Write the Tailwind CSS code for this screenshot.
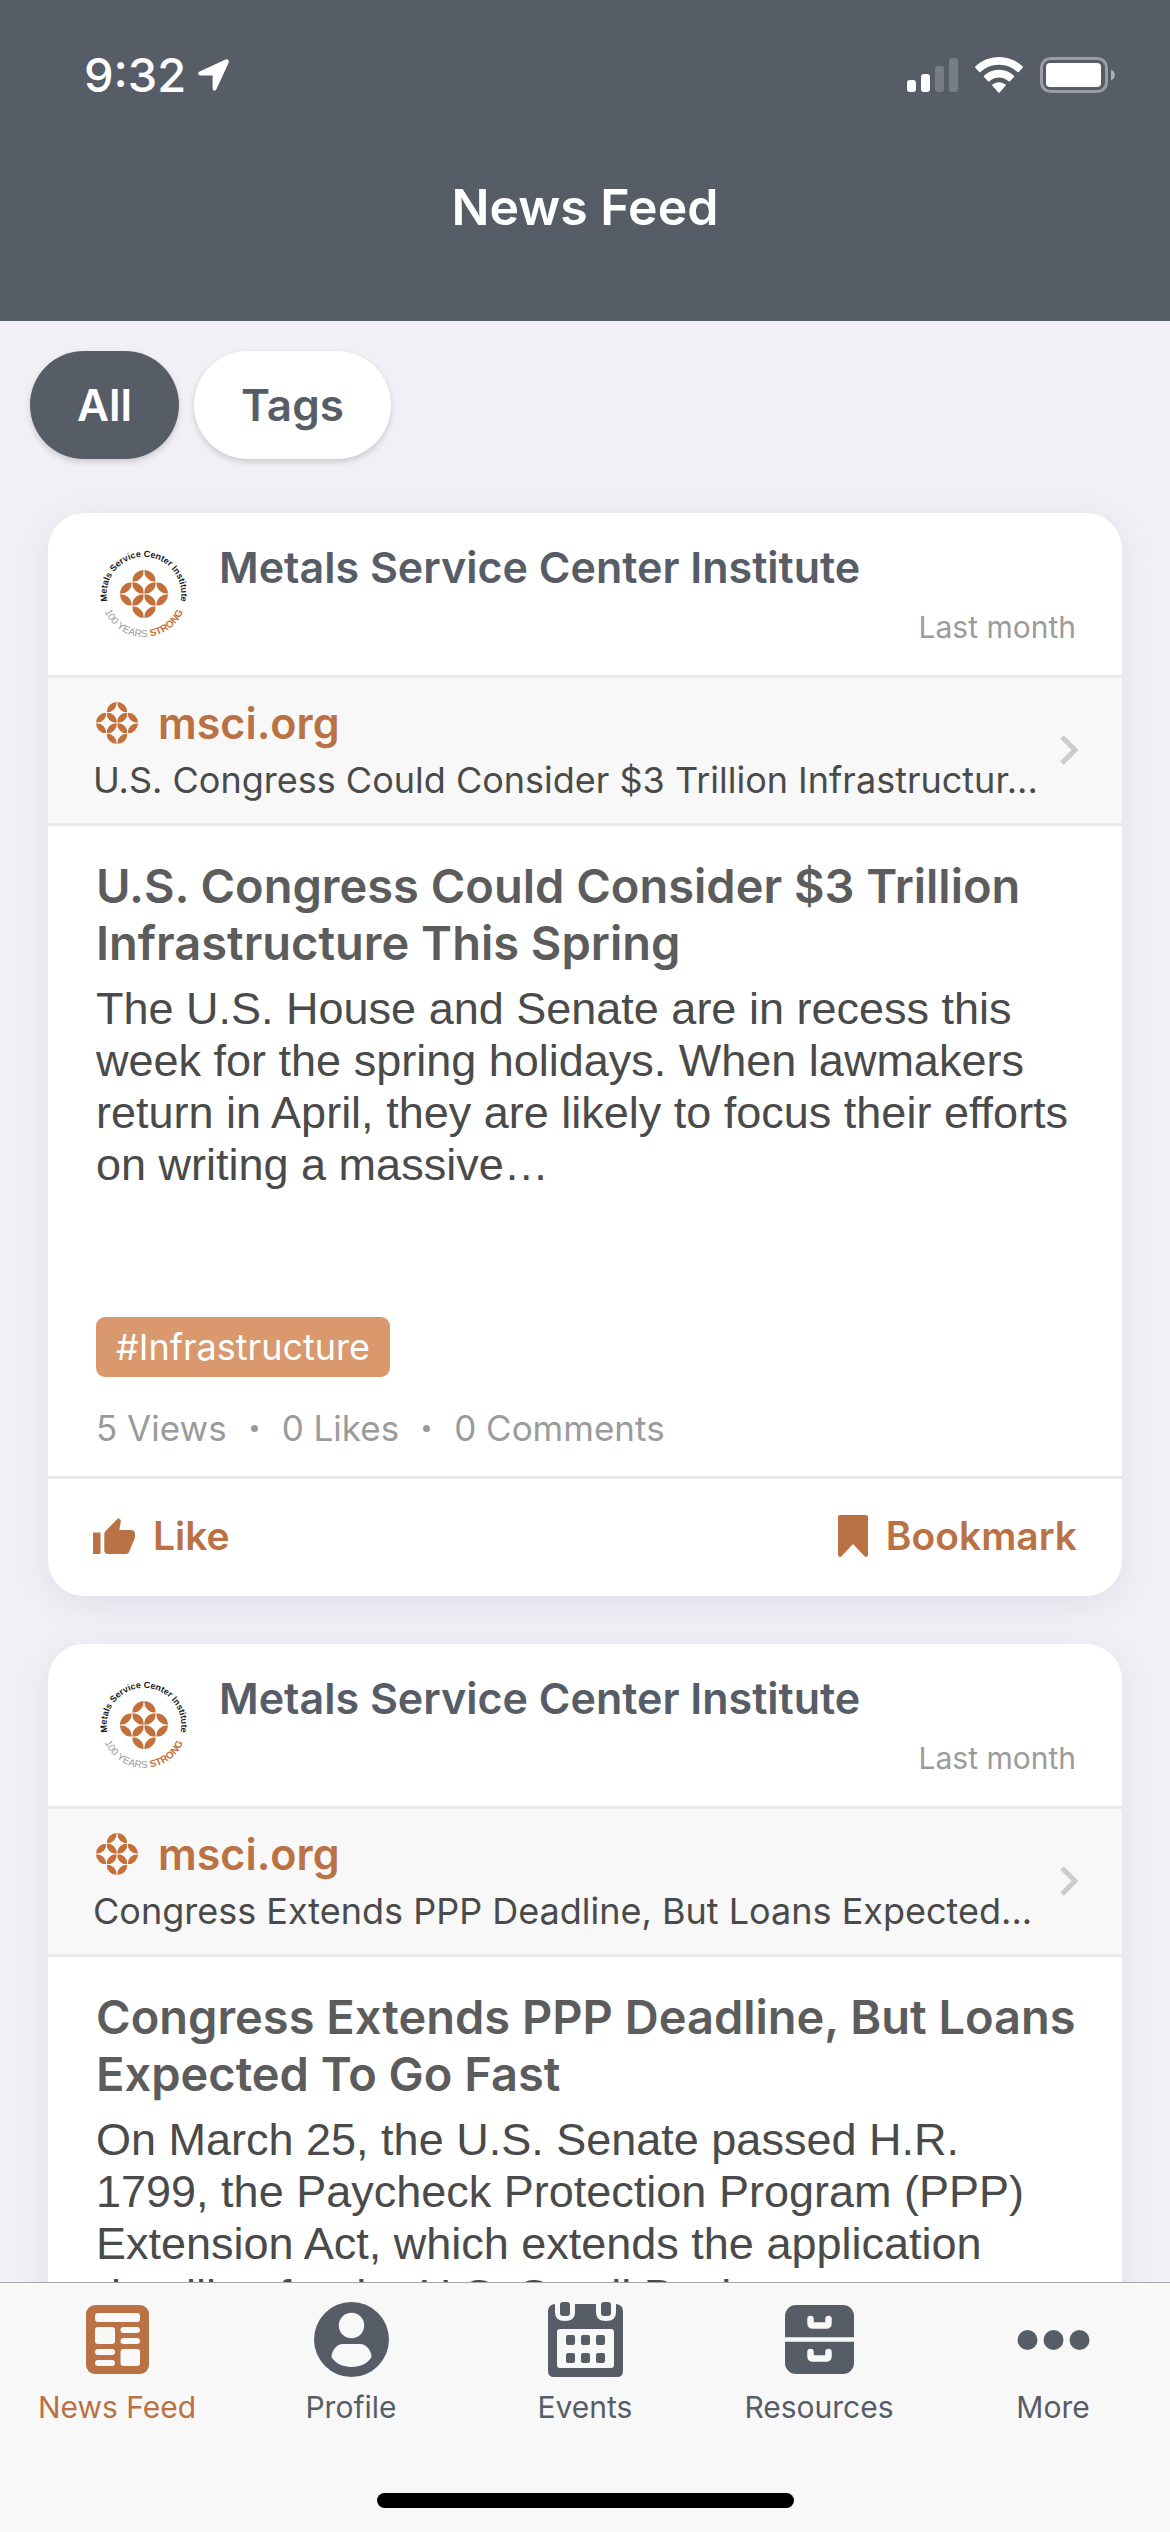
<!DOCTYPE html>
<html lang="en">
<head>
    <meta charset="UTF-8">
    <meta name="viewport" content="width=device-width, initial-scale=1.0">
    <title>News Feed</title>
    <script src="https://cdn.jsdelivr.net/npm/@tailwindcss/browser@4"></script>
</head>
<body class="flex h-screen flex-col overflow-hidden bg-[#f1f0f6] font-['Inter',sans-serif] text-[#4a4a4a]">

    <!-- Shared shapes -->
    <svg class="hidden" aria-hidden="true">
        <symbol id="rosette" viewBox="-20 -20 40 40">
            <g fill="#c4703a">
                <path id="ring" d="M0-20A10 10 0 0 1 10-10A10 10 0 0 1 0-20M10-10A10 10 0 0 1 0 0A10 10 0 0 1 10-10M0 0A10 10 0 0 1-10-10A10 10 0 0 1 0 0M-10-10A10 10 0 0 1 0-20A10 10 0 0 1-10-10"/>
                <use href="#ring" transform="rotate(90)"/>
                <use href="#ring" transform="rotate(180)"/>
                <use href="#ring" transform="rotate(270)"/>
            </g>
            <path d="M0-20V20M-20 0H20M-10-20V20M10-20V20M-20-10H20M-20 10H20" stroke="#fff" stroke-width=".7"/>
        </symbol>
        <symbol id="logo" viewBox="-48 -48 96 96">
            <path id="arc-top" d="M-35 13A37.300 37.300 0 1 1 35 13" fill="none"/>
            <path id="arc-bottom" d="M-43 0A43 43 0 0 0 43 0" fill="none"/>
            <use href="#rosette" x="-24" y="-24" width="48" height="48"/>
            <text font-family="Liberation Sans Narrow, Liberation Sans, sans-serif" font-weight="700" font-size="9" fill="#1a1a1a" text-anchor="middle"><textPath href="#arc-top" startOffset="50%">Metals Service Center Institute</textPath></text>
            <text font-family="Liberation Sans Narrow, Liberation Sans, sans-serif" font-size="10" fill="#9b9b9b" text-anchor="middle"><textPath href="#arc-bottom" startOffset="50%">100 YEARS <tspan fill="#c4703a" font-weight="700">STRONG</tspan></textPath></text>
        </symbol>
        <symbol id="chevron" viewBox="0 0 18 30">
            <path d="M2 2l13 13L2 28" fill="none" stroke="#cccccc" stroke-width="5"/>
        </symbol>
        <symbol id="thumb" viewBox="0 0 42 36">
            <path d="M0 14.500H7.500V36H0zM25.400 0l1.700 1.500q.9.900.7 2.200L26.300 12H38q4 0 4 4v2.600q0 .9-.3 1.700l-5.500 13.400Q35.200 36 33 36H15q-3.700 0-3.700-3.700V16q0-1.600 1.100-2.800z"/>
        </symbol>
        <symbol id="bookmark" viewBox="0 0 30 42">
            <path d="M2 0h26q2 0 2 2v37.500c0 2-2 3.200-3.500 1.800L15 29 3.500 41.300C2 42.700 0 41.500 0 39.500V2q0-2 2-2z"/>
        </symbol>
    </svg>

    <header class="bg-[#575d67] pb-[84px] text-white">
        <!-- Status bar -->
        <div class="flex h-[150px] items-center justify-between pl-[84px] pr-[54px]">
            <div class="flex items-center gap-3">
                <span class="text-[47px] leading-[54px] font-medium">9:32</span>
                <svg class="h-[32px] w-[31px]" viewBox="0 0 31 32" fill="currentColor"><path d="M27.600.4 1.700 12.500C-.6 13.600-.2 16.400 2.300 16.400H14.600V29.300c0 2.800 2.900 3.100 3.900.8L30.500 4C31.500 1.500 29.800-.6 27.600.4z"/></svg>
            </div>
            <div class="flex items-center gap-[17px]">
                <svg class="h-[36px] w-[51px]" viewBox="0 0 51 36" fill="currentColor">
                    <rect x="0" y="23" width="9" height="12" rx="3"/>
                    <rect x="14" y="17" width="9" height="18" rx="3"/>
                    <rect x="28" y="9" width="9" height="26" rx="3" opacity=".2"/>
                    <rect x="42" y="1" width="9" height="34" rx="3" opacity=".2"/>
                </svg>
                <svg class="h-[36px] w-[48px]" viewBox="0 0 48 36" fill="currentColor">
                    <path d="M24 0C33.200 0 41.600 3.600 47.700 9.500q.6.600 0 1.200L43.700 15q-.6.600-1.200 0C37.700 10.500 31.200 7.700 24 7.700S10.300 10.500 5.500 15q-.6.600-1.200 0L.3 10.700q-.6-.6 0-1.200C6.400 3.600 14.800 0 24 0z"/>
                    <path d="M24 12.800c5.800 0 11 2.200 15 5.900q.6.600 0 1.200l-4.200 4.300q-.6.600-1.200.1C31 22 27.700 20.500 24 20.500S17 22 14.400 24.300q-.6.500-1.200-.1L9 19.900q-.6-.6 0-1.200c4-3.700 9.200-5.900 15-5.900z"/>
                    <path d="M24 25.200c2.500 0 4.800.9 6.600 2.400q.6.500 0 1.100L24.600 35.500q-.6.600-1.200 0L17.400 28.700q-.6-.6 0-1.100c1.800-1.500 4.100-2.400 6.600-2.400z"/>
                </svg>
                <svg class="h-[36px] w-[76px]" viewBox="0 0 76 36" fill="currentColor">
                    <rect x="1.500" y="1.500" width="65" height="33" rx="9" fill="none" stroke="currentColor" stroke-width="3" opacity=".4"/>
                    <rect x="6" y="6" width="55" height="24" rx="4"/>
                    <path d="M71 12.500c5 2 5 9 0 11z" opacity=".5"/>
                </svg>
            </div>
        </div>
        <h1 class="mt-[27px] text-center text-[50px] leading-[60px] font-semibold">News Feed</h1>
    </header>

    <main class="min-h-0 flex-1 overflow-hidden pt-[30px]">
        <!-- Filters -->
        <div class="flex gap-[15px] px-[30px]">
            <button type="button" class="h-[108px] rounded-full bg-[#575d67] px-[47px] text-[44px] font-semibold text-white shadow-[0_3px_6px_rgba(0,0,0,0.16)]">All</button>
            <button type="button" class="h-[108px] rounded-full bg-white px-[47px] text-[44px] font-semibold text-[#575d67] shadow-[0_3px_6px_rgba(0,0,0,0.16)]">Tags</button>
        </div>

        <div class="mt-[54px] flex flex-col gap-12 px-12">
            <!-- Post 1 -->
            <article class="overflow-hidden rounded-[36px] bg-white shadow-[0_8px_36px_rgba(40,30,70,0.08)]">
                <div class="flex h-[162px] items-center gap-[27px] pr-[46px] pl-12">
                    <svg class="size-24 shrink-0" role="img" aria-label="Metals Service Center Institute"><use href="#logo"/></svg>
                    <div class="flex-1">
                        <h2 class="text-[43px] leading-[48px] font-semibold text-[#575d67]">Metals Service Center Institute</h2>
                        <p class="mt-[18px] text-right text-[30px] leading-[36px] text-[#9b9b9b]">Last month</p>
                    </div>
                </div>
                <a href="#" class="flex items-center justify-between border-y-3 border-[#e9e9e9] bg-[#f8f8f8] pt-[21px] pr-[44px] pb-[22px] pl-[45px]">
                    <div class="min-w-0">
                        <div class="flex items-center gap-[20px] pl-[3px] text-[43px] leading-[48px] font-semibold text-[#ba7144]">
                            <svg class="size-[42px]"><use href="#rosette"/></svg>
                            msci.org
                        </div>
                        <p class="mt-3 text-[36px] leading-[42px] whitespace-nowrap">U.S. Congress Could Consider $3 Trillion Infrastructur...</p>
                    </div>
                    <svg class="h-[30px] w-[18px] shrink-0"><use href="#chevron"/></svg>
                </a>
                <div class="pt-[31px] pr-[42px] pb-[27px] pl-12">
                    <h3 class="text-[47px] leading-[57px] font-semibold text-[#5c5c5c]">U.S. Congress Could Consider $3 Trillion Infrastructure This Spring</h3>
                    <p class="mt-3 font-['Liberation_Sans',sans-serif] text-[45px] leading-[52px]">The U.S. House and Senate are in recess this week for the spring holidays. When lawmakers return in April, they are likely to focus their efforts on writing a massive…</p>
                    <a href="#" class="mt-[126px] inline-block rounded-[9px] bg-[#d9996d] px-[20px] align-top text-[36px] leading-[60px] text-white">#Infrastructure</a>
                    <ul class="mt-[30px] flex items-center gap-[24px] text-[35px] leading-[42px] text-[#9b9b9b]">
                        <li>5 Views</li>
                        <li class="size-[7px] rounded-full bg-[#9b9b9b]"></li>
                        <li>0 Likes</li>
                        <li class="size-[7px] rounded-full bg-[#9b9b9b]"></li>
                        <li>0 Comments</li>
                    </ul>
                </div>
                <div class="flex h-[120px] items-center justify-between border-t-3 border-[#e9e9e9] px-[45px] pb-[3px] text-[39px] font-semibold text-[#ba7144]">
                    <button type="button" class="flex items-center gap-[18px]">
                        <svg class="h-[36px] w-[42px] fill-current"><use href="#thumb"/></svg>
                        Like
                    </button>
                    <button type="button" class="flex items-center gap-[18px]">
                        <svg class="h-[42px] w-[30px] fill-current"><use href="#bookmark"/></svg>
                        Bookmark
                    </button>
                </div>
            </article>

            <!-- Post 2 -->
            <article class="overflow-hidden rounded-[36px] bg-white shadow-[0_8px_36px_rgba(40,30,70,0.08)]">
                <div class="flex h-[162px] items-center gap-[27px] pr-[46px] pl-12">
                    <svg class="size-24 shrink-0" role="img" aria-label="Metals Service Center Institute"><use href="#logo"/></svg>
                    <div class="flex-1">
                        <h2 class="text-[43px] leading-[48px] font-semibold text-[#575d67]">Metals Service Center Institute</h2>
                        <p class="mt-[18px] text-right text-[30px] leading-[36px] text-[#9b9b9b]">Last month</p>
                    </div>
                </div>
                <a href="#" class="flex items-center justify-between border-y-3 border-[#e9e9e9] bg-[#f8f8f8] pt-[21px] pr-[44px] pb-[22px] pl-[45px]">
                    <div class="min-w-0">
                        <div class="flex items-center gap-[20px] pl-[3px] text-[43px] leading-[48px] font-semibold text-[#ba7144]">
                            <svg class="size-[42px]"><use href="#rosette"/></svg>
                            msci.org
                        </div>
                        <p class="mt-3 text-[36px] leading-[42px] whitespace-nowrap">Congress Extends PPP Deadline, But Loans Expected...</p>
                    </div>
                    <svg class="h-[30px] w-[18px] shrink-0"><use href="#chevron"/></svg>
                </a>
                <div class="pt-[31px] pr-[42px] pb-[27px] pl-12">
                    <h3 class="text-[47px] leading-[57px] font-semibold text-[#5c5c5c]">Congress Extends PPP Deadline, But Loans Expected To Go Fast</h3>
                    <p class="mt-3 font-['Liberation_Sans',sans-serif] text-[45px] leading-[52px]">On March 25, the U.S. Senate passed H.R. 1799, the Paycheck Protection Program (PPP) Extension Act, which extends the application deadline for the U.S. Small Business</p>
                </div>
            </article>
        </div>
    </main>

    <!-- Tab bar -->
    <nav class="shrink-0 border-t border-[#a9a9ab] bg-[#f8f8f8] pt-[19px] pb-6 text-[30px] leading-[36px] text-[#575d67]">
        <div class="grid grid-cols-5">
            <a href="#" class="flex flex-col items-center gap-[12px] text-[#ba7144]">
                <svg class="size-[75px]" viewBox="0 0 75 75">
                    <rect x="6" y="3" width="63" height="69" rx="9" fill="currentColor"/>
                    <g fill="#f8f8f8">
                        <rect x="15" y="11" width="45" height="9" rx="3"/>
                        <rect x="15" y="25" width="20" height="17" rx="3"/>
                        <rect x="40.500" y="25" width="19.500" height="6" rx="3"/>
                        <rect x="40.500" y="36" width="19.500" height="6" rx="3"/>
                        <rect x="15" y="47" width="20" height="6" rx="3"/>
                        <rect x="15" y="58" width="20" height="6" rx="3"/>
                        <rect x="40.500" y="47" width="19.500" height="17" rx="3"/>
                    </g>
                </svg>
                News Feed
            </a>
            <a href="#" class="flex flex-col items-center gap-[12px]">
                <svg class="size-[75px]" viewBox="0 0 75 75">
                    <circle cx="37.500" cy="37.500" r="37.500" fill="currentColor"/>
                    <g fill="#f8f8f8">
                        <circle cx="37.500" cy="23.500" r="12.700"/>
                        <path d="M29 42H46C53 42 57.500 49.500 57.500 55 54 61.500 46 65 37.500 65S21 61.500 17.500 55C17.500 49.500 22 42 29 42z"/>
                    </g>
                </svg>
                Profile
            </a>
            <a href="#" class="flex flex-col items-center gap-[12px]">
                <svg class="size-[75px]" viewBox="0 0 75 75">
                    <path d="M7 2H68Q75 3 75 9V69Q75 75 69 75H6Q0 75 0 69V9Q0 3 7 2z" fill="currentColor"/>
                    <g fill="#f8f8f8">
                        <path d="M7 0H27V10.500Q27 19 17 19T7 10.500zM48 0H68V10.500Q68 19 58 19T48 10.500z"/>
                        <rect x="9" y="27" width="57" height="39" rx="3"/>
                    </g>
                    <g fill="currentColor">
                        <rect x="12" y="0" width="10" height="14" rx="3"/>
                        <rect x="53" y="0" width="10" height="14" rx="3"/>
                        <rect x="18" y="33" width="9" height="10" rx="2"/>
                        <rect x="33" y="33" width="9" height="10" rx="2"/>
                        <rect x="48" y="33" width="9" height="10" rx="2"/>
                        <rect x="18" y="51" width="9" height="10" rx="2"/>
                        <rect x="33" y="51" width="9" height="10" rx="2"/>
                        <rect x="48" y="51" width="9" height="10" rx="2"/>
                    </g>
                </svg>
                Events
            </a>
            <a href="#" class="flex flex-col items-center gap-[12px]">
                <svg class="size-[75px]" viewBox="0 0 75 75">
                    <rect x="3" y="3" width="69" height="69" rx="11" fill="currentColor"/>
                    <path d="M3 37.500H72" stroke="#f8f8f8" stroke-width="4.500"/>
                    <path d="M28.500 17V21Q28.500 23.500 31 23.500H44Q46.500 23.500 46.500 21V17M28.500 50V54Q28.500 56.500 31 56.500H44Q46.500 56.500 46.500 54V50" fill="none" stroke="#f8f8f8" stroke-width="6.500" stroke-linecap="round"/>
                </svg>
                Resources
            </a>
            <a href="#" class="flex flex-col items-center gap-[12px]">
                <svg class="size-[75px]" viewBox="0 0 75 75" fill="currentColor">
                    <circle cx="11.500" cy="38" r="10"/>
                    <circle cx="37.500" cy="38" r="10"/>
                    <circle cx="63.500" cy="38" r="10"/>
                </svg>
                More
            </a>
        </div>
        <!-- Home indicator -->
        <div class="mx-auto mt-[68px] h-[15px] w-[417px] rounded-full bg-black"></div>
    </nav>
</body>
</html>
